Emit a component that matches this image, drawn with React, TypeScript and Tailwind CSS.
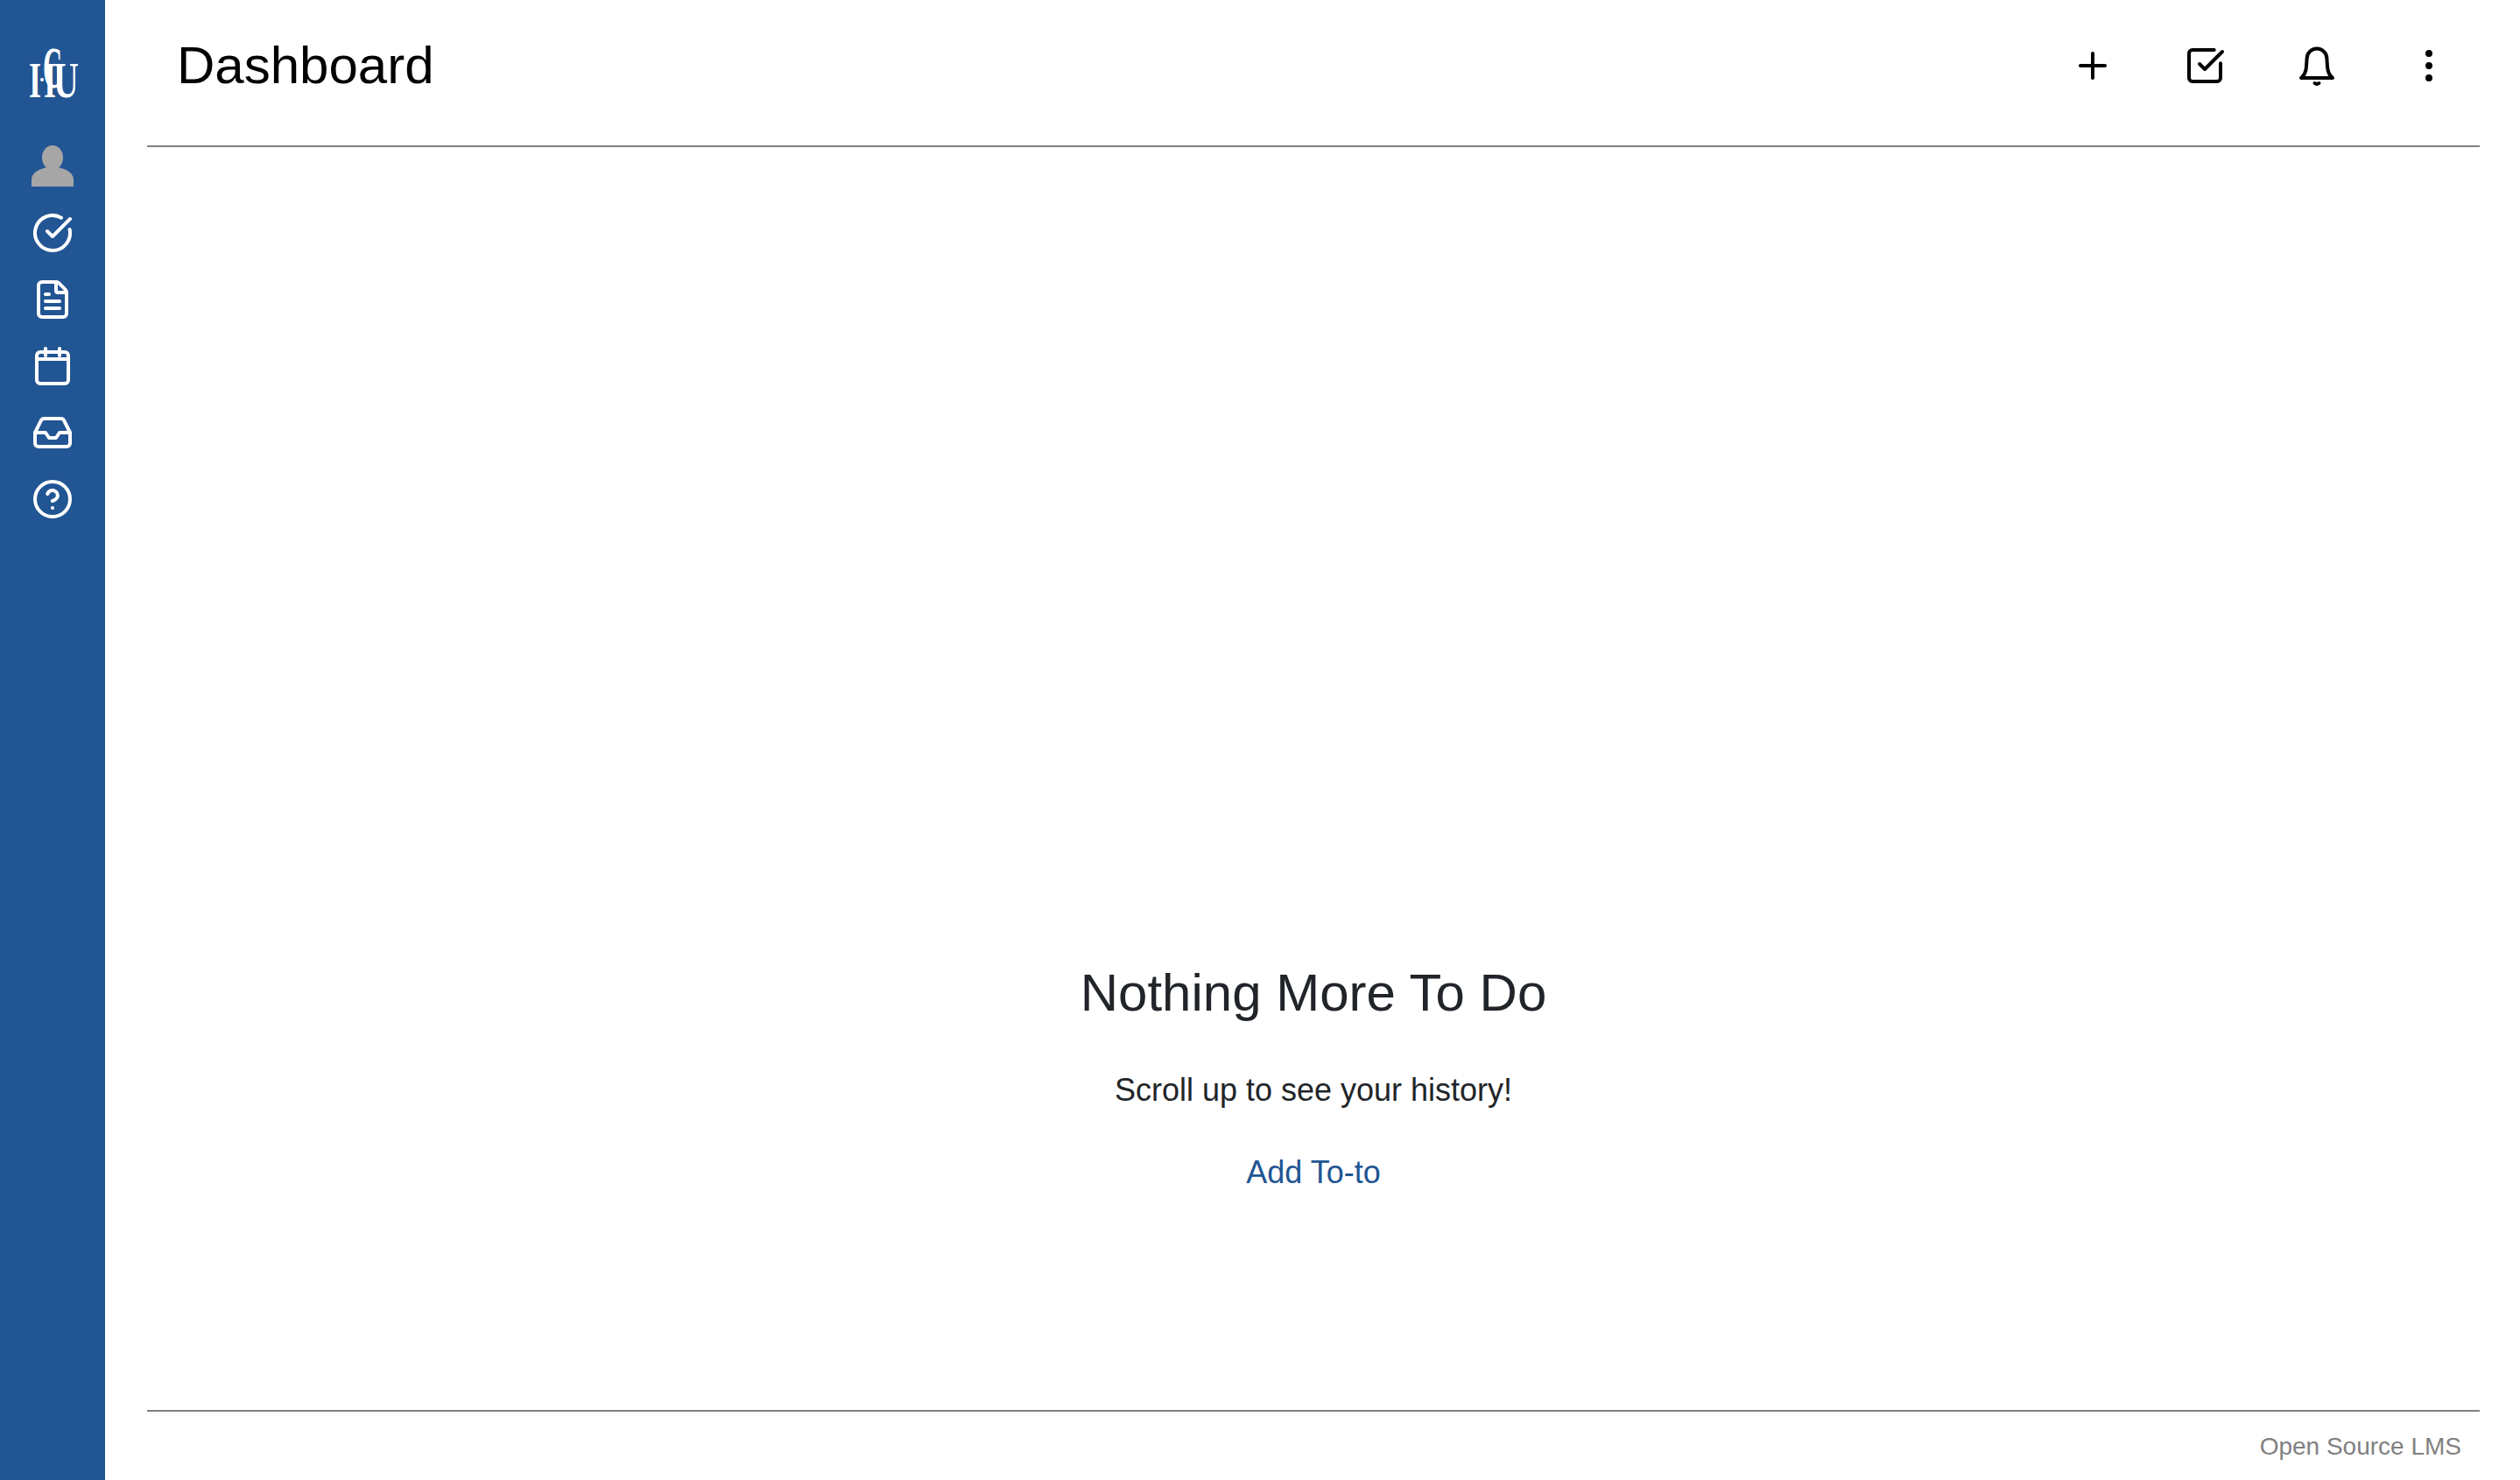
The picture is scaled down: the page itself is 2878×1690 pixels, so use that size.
import { CircleCheckBig, FileText, Inbox, CircleHelp, Plus, SquareCheckBig, EllipsisVertical } from 'lucide-react';

function Logo() {
  return (
    <svg width="60" height="60" viewBox="0 0 60 60" fill="white" className="block overflow-visible" style={{ fontFamily: '"Liberation Serif", serif' }}>
      <text x="3" y="58" fontSize="58" fontWeight="700" textLength="14" lengthAdjust="spacingAndGlyphs">I</text>
      <circle cx="18" cy="38" r="2" />
      <text x="20" y="58" fontSize="58" fontWeight="700" textLength="14" lengthAdjust="spacingAndGlyphs">I</text>
      <text x="19" y="47" fontSize="68" fontWeight="700" textLength="22" lengthAdjust="spacingAndGlyphs">C</text>
      <text x="31" y="58" fontSize="58" fontWeight="700" textLength="29" lengthAdjust="spacingAndGlyphs">U</text>
    </svg>
  );
}

function Person() {
  return (
    <svg width="48" height="48" viewBox="0 0 48 48" fill="#a6a6a6">
      <ellipse cx="24" cy="14" rx="12" ry="14" />
      <path d="M0 47v-8c0-6 6-11 14-13l4-1c4 2 8 2 12 0l4 1c8 2 14 7 14 13v8z" />
    </svg>
  );
}

function Calendar() {
  return (
    <svg width="48" height="48" viewBox="0 0 24 24" fill="none" stroke="white" strokeWidth="2" strokeLinecap="round" strokeLinejoin="round">
      <rect x="3" y="4" width="18" height="18" rx="2" />
      <path d="M8 2v4M16 2v4M3 8h18" />
    </svg>
  );
}

function Bell() {
  return (
    <svg width="48" height="48" viewBox="0 0 24 24" fill="none" stroke="black" strokeWidth="2" strokeLinecap="round" strokeLinejoin="round">
      <path d="M3 19h18c-2-1.600-2.800-3.400-3-6.500L17.700 8a5.700 5.700 0 0 0-11.400 0L6 12.500C5.800 15.600 5 17.400 3 19z" />
      <path d="M10.800 22a2 2 0 0 0 2.400 0" />
    </svg>
  );
}

const sideIcons = [
  <Person key="person" />,
  <CircleCheckBig key="todo" size={48} color="white" />,
  <FileText key="file" size={48} color="white" />,
  <Calendar key="calendar" />,
  <Inbox key="inbox" size={48} color="white" />,
  <CircleHelp key="help" size={48} color="white" />,
];

export default function App() {
  return (
    <div className="flex h-[1690px] w-full bg-white font-['Liberation_Sans',sans-serif]">
      <aside className="w-[120px] shrink-0 bg-[#225593] flex flex-col items-center">
        <div className="h-[152px] pt-[53px]">
          <Logo />
        </div>
        {sideIcons.map(icon => (
          <div key={icon.key} className="h-[76px] flex items-center justify-center">
            {icon}
          </div>
        ))}
      </aside>

      <main className="flex-1 flex flex-col pl-[48px] pr-[46px]">
        <header className="h-[168px] shrink-0 flex items-center justify-between pl-[34px] pr-[34px] pb-[16px] border-b-2 border-[#808080]">
          <h1 className="text-[60px] leading-none text-black">Dashboard</h1>
          <div className="flex items-center gap-[80px]">
            <Plus size={48} color="black" />
            <SquareCheckBig size={48} color="black" />
            <Bell />
            <EllipsisVertical size={48} color="black" />
          </div>
        </header>

        <section className="flex-1 flex flex-col items-center justify-end pb-[244px]">
          <h2 className="text-[60px] leading-[72px] text-[#212529]">Nothing More To Do</h2>
          <p className="mt-[48px] text-[36px] leading-[54px] text-[#212529]">Scroll up to see your history!</p>
          <a className="mt-[40px] text-[36px] leading-[54px] text-[#225593]">Add To-to</a>
        </section>

        <footer className="h-[80px] shrink-0 border-t-2 border-[#808080] pt-[24px] pr-[21px] text-right text-[28px] leading-[32px] text-[#808080]">
          Open Source LMS
        </footer>
      </main>
    </div>
  );
}
